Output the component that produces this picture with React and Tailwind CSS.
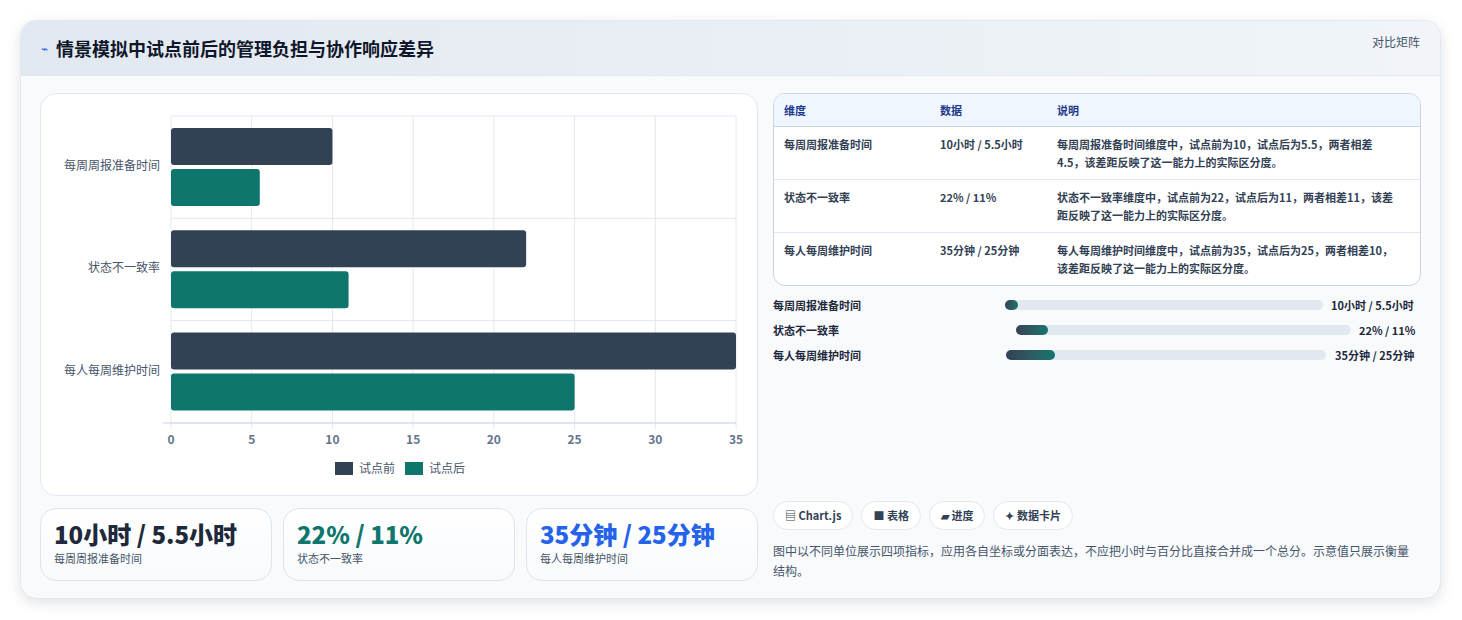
import React from "react";

const F = { fontFamily: '"Noto Sans CJK SC", "Noto Sans", sans-serif' };

function Chart() {
  const x0 = 130, sc = 565 / 35, top = 22, rowH = 102.3;
  const cats = [["每周周报准备时间", 10, 5.5], ["状态不一致率", 22, 11], ["每人每周维护时间", 35, 25]];
  return (
    <svg width="717" height="402" className="block">
      {[0, 5, 10, 15, 20, 25, 30, 35].map((v) => (
        <g key={v}>
          <line x1={x0 + v * sc} x2={x0 + v * sc} y1={top} y2={top + 307 + 6} stroke="#e2e8f0" />
          <text x={x0 + v * sc} y={350} textAnchor="middle" fontSize="12" fill="#64748b" fontWeight="600">{v}</text>
        </g>
      ))}
      {[0, 1, 2, 3].map((i) => (
        <line key={i} x1={x0} x2={x0 + 565} y1={top + i * rowH} y2={top + i * rowH} stroke="#e2e8f0" />
      ))}
      <line x1={x0 - 8} x2={x0 + 565} y1={top + 307} y2={top + 307} stroke="#cbd5e1" />
      {cats.map(([n, a, b], i) => {
        const y = top + i * rowH;
        return (
          <g key={n}>
            <text x={x0 - 11} y={y + 54} textAnchor="end" fontSize="12" fill="#475569">{n}</text>
            <rect x={x0} y={y + 12} width={a * sc} height={37} rx="3" fill="#334155" />
            <rect x={x0} y={y + 53} width={b * sc} height={37} rx="3" fill="#0f766e" />
          </g>
        );
      })}
      <rect x="294" y="368" width="18" height="13" fill="#334155" />
      <text x="318" y="379" fontSize="12" fill="#475569">试点前</text>
      <rect x="364" y="368" width="18" height="13" fill="#0f766e" />
      <text x="388" y="379" fontSize="12" fill="#475569">试点后</text>
    </svg>
  );
}

const rows = [
  ["每周周报准备时间", "10小时 / 5.5小时", "每周周报准备时间维度中，试点前为10，试点后为5.5，两者相差4.5，该差距反映了这一能力上的实际区分度。"],
  ["状态不一致率", "22% / 11%", "状态不一致率维度中，试点前为22，试点后为11，两者相差11，该差距反映了这一能力上的实际区分度。"],
  ["每人每周维护时间", "35分钟 / 25分钟", "每人每周维护时间维度中，试点前为35，试点后为25，两者相差10，该差距反映了这一能力上的实际区分度。"],
];

export default function App() {
  return (
    <div style={F} className="w-[1462px] h-[620px] bg-white pt-[20px] pl-[20px]">
      <div className="w-[1421px] h-[579px] rounded-2xl border border-[#e2e8f0] bg-[#f8fafc] shadow-[0_4px_14px_rgba(15,23,42,0.12)] overflow-hidden flex flex-col">
        <div className="h-[55px] shrink-0 flex items-center justify-between px-[20px] bg-gradient-to-r from-[#e2e8f0] to-[#f1f5f9] border-b border-[#e2e8f0]">
          <div className="flex items-center gap-[8px]">
            <span className="text-[#2563eb] text-[12px]">⌁</span>
            <span className="text-[18px] font-bold text-[#0f172a]">情景模拟中试点前后的管理负担与协作响应差异</span>
          </div>
          <span className="text-[12px] text-[#475569] -mt-[12px]">对比矩阵</span>
        </div>
        <div className="flex gap-[15px] px-[19px] pt-[17px]">
          <div className="w-[718px] flex flex-col gap-[12px]">
            <div className="h-[403px] rounded-2xl border border-[#e2e8f0] bg-white">
              <Chart />
            </div>
            <div className="flex gap-[11px]">
              {[["10小时 / 5.5小时", "#1e293b", "每周周报准备时间"], ["22% / 11%", "#0f766e", "状态不一致率"], ["35分钟 / 25分钟", "#2563eb", "每人每周维护时间"]].map(([v, c, l]) => (
                <div key={l} className="w-[232px] h-[73px] rounded-2xl border border-[#dbe4f0] bg-gradient-to-b from-white to-[#f8fafc] px-[13px] pt-[9px]">
                  <div className="text-[24px] font-extrabold leading-[32px]" style={{ color: c }}>{v}</div>
                  <div className="text-[11px] text-[#475569] leading-[16px]">{l}</div>
                </div>
              ))}
            </div>
          </div>
          <div className="w-[650px] h-[488px] flex flex-col justify-between">
            <div>
              <div className="rounded-xl border border-[#cbd5e1] bg-white overflow-hidden text-[11px] font-semibold">
                <div className="flex h-[33px] items-center bg-[#eff6ff] text-[#1e3a8a] border-b border-[#cbd5e1]">
                  <div className="w-[156px] pl-[10px]">维度</div>
                  <div className="w-[117px] pl-[10px]">数据</div>
                  <div className="flex-1 pl-[10px]">说明</div>
                </div>
                {rows.map((r, i) => (
                  <div key={i} className={"flex py-[8px] text-[#334155] leading-[18px] " + (i < 2 ? "border-b border-[#e2e8f0]" : "")}>
                    <div className="w-[156px] pl-[10px]">{r[0]}</div>
                    <div className="w-[117px] pl-[10px]">{r[1]}</div>
                    <div className="flex-1 pl-[10px] pr-[20px]">{r[2]}</div>
                  </div>
                ))}
              </div>
              <div className="mt-[10px] flex flex-col gap-[7px] text-[11px] font-semibold text-[#1e293b]">
                {[
                  ["每周周报准备时间", "10小时 / 5.5小时", "w-[232px]", "w-[318px]", "w-[13px]", "ml-[8px]"],
                  ["状态不一致率", "22% / 11%", "w-[243px]", "w-[335px]", "w-[32px]", "ml-[8px]"],
                  ["每人每周维护时间", "35分钟 / 25分钟", "w-[233px]", "w-[320px]", "w-[49px]", "ml-[9px]"],
                ].map(([a, b, lw, tw, fw, ml]) => (
                  <div key={a} className="flex items-center h-[18px]">
                    <div className={lw}>{a}</div>
                    <div className={tw + " h-[10px] rounded-full bg-[#e2e8f0]"}>
                      <div className={fw + " h-full rounded-full bg-gradient-to-r from-[#334155] to-[#0f766e]"} />
                    </div>
                    <div className={ml}>{b}</div>
                  </div>
                ))}
              </div>
            </div>
            <div>
              <div className="flex gap-[8px] text-[11px] font-semibold text-[#334155]">
                {["▤ Chart.js", "■ 表格", "▰ 进度", "✦ 数据卡片"].map((t) => (
                  <span key={t} className="h-[29px] px-[11px] flex items-center rounded-full border border-[#e2e8f0] bg-white">{t}</span>
                ))}
              </div>
              <p className="mt-[11px] text-[12px] leading-[20px] text-[#475569] pr-[2px]">图中以不同单位展示四项指标，应用各自坐标或分面表达，不应把小时与百分比直接合并成一个总分。示意值只展示衡量结构。</p>
            </div>
          </div>
        </div>
      </div>
    </div>
  );
}
